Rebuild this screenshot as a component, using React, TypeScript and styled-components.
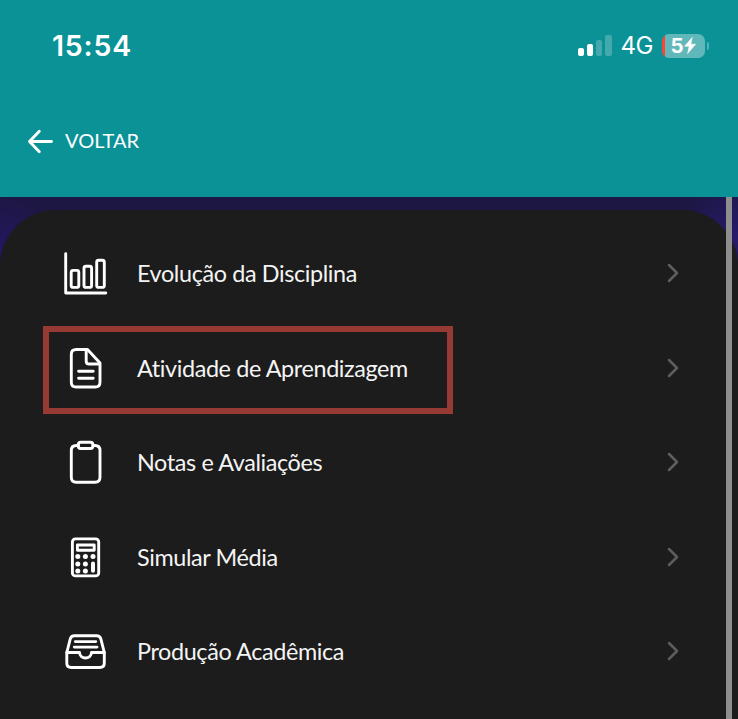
import React from "react";
import styled, { createGlobalStyle } from "styled-components";

const GlobalStyle = createGlobalStyle`
  * { box-sizing: border-box; }
  html, body { margin: 0; padding: 0; background: #1c1c1c; overflow: hidden; }
`;

const Screen = styled.div`
  width: 738px;
  height: 719px;
  display: flex;
  flex-direction: column;
  overflow: hidden;
  color: #f4f4f4;
  font-family: Lato, sans-serif;
`;

const Header = styled.header`
  height: 197px;
  flex: none;
  background: #0a9297;
`;

const StatusBar = styled.div`
  height: 91px;
  padding: 0 29px 0 52px;
  display: flex;
  align-items: center;
  justify-content: space-between;
  color: #fff;
  font-family: Inter, sans-serif;
`;

const Clock = styled.span`
  font-size: 28.5px;
  font-weight: 600;
  letter-spacing: 0.8px;
`;

const Indicators = styled.div`
  display: flex;
  align-items: center;
`;

const Signal = styled.div`
  display: flex;
  align-items: flex-end;
  gap: 3px;
  margin-right: 9px;
  height: 21px;
`;

const SignalBar = styled.i<{ $height: number; $active?: boolean }>`
  width: 6.2px;
  height: ${(p) => p.$height}px;
  border-radius: 2px;
  background: ${(p) => (p.$active ? "#fff" : "#43a9ad")};
`;

const Network = styled.span`
  width: 32px;
  margin-right: 9px;
  font-size: 24px;
  line-height: 26px;
  padding-top: 1px;
  letter-spacing: -0.4px;
`;

const Battery = styled.div`
  width: 43px;
  height: 24px;
  display: flex;
  align-items: center;
  justify-content: center;
  border-radius: 7px;
  background: linear-gradient(to right, #ff4335 2.5px, #60b8bb 2.5px);
  font-size: 20.5px;
  font-weight: 700;
  line-height: 24px;
`;

const BatteryTip = styled.i`
  width: 2.5px;
  height: 8px;
  margin-left: 2px;
  border-radius: 0 4px 4px 0;
  background: #54b1b5;
`;

const BackButton = styled.button`
  display: flex;
  align-items: center;
  gap: 12px;
  height: 40px;
  margin: 30px 0 0 27px;
  padding: 0;
  border: 0;
  background: none;
  color: #fff;
  font: 400 20px/24px Lato, sans-serif;
`;

const BackLabel = styled.span`
  padding-bottom: 2px;
`;

const Content = styled.main`
  position: relative;
  flex: 1;
  padding-top: 13px;
  background:
    radial-gradient(circle at 0 55px, #231760, #1d1743 60px, transparent 61px),
    radial-gradient(circle at 738px 40px, #261a6c, #1d1743 60px, transparent 61px),
    #1d1743;
`;

const Panel = styled.nav`
  height: 509px;
  padding-top: 16px;
  border-radius: 56px 56px 0 0;
  background: #1c1c1c;
`;

const Row = styled.a`
  position: relative;
  display: flex;
  align-items: center;
  height: 94.5px;
  padding: 0 56px 0 61px;
`;

const Label = styled.span`
  flex: 1;
  margin-left: 28px;
  font-size: 23.4px;
  line-height: 30px;
  letter-spacing: -0.38px;
  white-space: nowrap;
`;

const Highlight = styled.div`
  position: absolute;
  left: 43px;
  top: 5.5px;
  width: 410px;
  height: 88px;
  border: 6px solid #963a33;
`;

const ScrollThumb = styled.div`
  position: absolute;
  top: 0;
  right: 6px;
  width: 6px;
  height: 100%;
  background: #8e8e8e;
`;

const Glyph = styled.svg`
  display: block;
  flex: none;
  fill: none;
  stroke: #fff;
  stroke-width: 2.9;
  stroke-linecap: round;
  stroke-linejoin: round;
`;

const Chevron = styled(Glyph)`
  stroke: #5e5e5e;
  stroke-width: 2.5;
`;

const Dot = styled.circle`
  fill: #fff;
  stroke: none;
`;

const ChartIcon = () => (
  <Glyph width="48" height="48">
    <path d="M4.7 4.6V44H44.8" />
    <rect x="10.2" y="21.4" width="7.6" height="17" rx="2" />
    <rect x="23" y="17.3" width="7.6" height="21.1" rx="2" />
    <rect x="35.7" y="11.3" width="7.6" height="27.1" rx="2" />
  </Glyph>
);

const DocumentIcon = () => (
  <Glyph width="48" height="48">
    <path d="M15.3 5.5H26.5L39 19V38.2Q39 43 34.2 43H15.1Q10.3 43 10.3 38.2V10.3Q10.3 5.5 15.3 5.5Z" />
    <path d="M25.2 6V17.2Q25.2 20 28 20H38.5M17.6 27.3H32.2M17.6 34.2H32.2" />
  </Glyph>
);

const ClipboardIcon = () => (
  <Glyph width="48" height="48">
    <path d="M17.5 7.5H15.3Q10.3 7.5 10.3 12.5V39.3Q10.3 44.3 15.3 44.3H34Q39 44.3 39 39.3V12.5Q39 7.5 34 7.5H32" />
    <rect x="17.3" y="4.2" width="14.6" height="6.3" rx="2.5" />
  </Glyph>
);

const CalculatorIcon = () => (
  <Glyph width="48" height="48">
    <rect x="11.4" y="5.9" width="26.3" height="37" rx="3" />
    <rect x="16.4" y="12" width="16.8" height="5.2" />
    {[23.6, 31, 38].map((y) =>
      [16.8, 24.4, 32].map((x) =>
        x === 32 && y !== 23.6 ? null : <Dot key={`${x}-${y}`} cx={x} cy={y} r="2.5" />
      )
    )}
    <path d="M32 30.4V37.8" strokeWidth="4" />
  </Glyph>
);

const InboxIcon = () => (
  <Glyph width="48" height="48">
    <path d="M5.8 25.5L9.2 12.2Q10.1 8.8 13.6 8.8H35.6Q39.1 8.8 39.9 12.2L43.3 25.5V36Q43.3 40.5 38.8 40.5H10.3Q5.8 40.5 5.8 36Z" />
    <path d="M5.8 25.5H18.5C18.8 32.8 30.2 32.8 30.5 25.5H43.3M14.3 14.6H34.8M13.3 20.1H36" />
  </Glyph>
);

const items = [
  { label: "Evolução da Disciplina", Icon: ChartIcon },
  { label: "Atividade de Aprendizagem", Icon: DocumentIcon, highlighted: true },
  { label: "Notas e Avaliações", Icon: ClipboardIcon },
  { label: "Simular Média", Icon: CalculatorIcon },
  { label: "Produção Acadêmica", Icon: InboxIcon },
];

export default function App() {
  return (
    <>
      <GlobalStyle />
      <Screen>
        <Header>
          <StatusBar>
            <Clock>15:54</Clock>
            <Indicators>
              <Signal>
                <SignalBar $height={8} $active />
                <SignalBar $height={12} $active />
                <SignalBar $height={16} />
                <SignalBar $height={21} />
              </Signal>
              <Network>4G</Network>
              <Battery>
                5
                <svg width="12" height="17" viewBox="0 0 12 17">
                  <path d="M8.2 0.5L0.6 9.2H5.2L3.6 16.5L11.6 7.2H6.8Z" fill="#fff" stroke="#fff" strokeWidth="0.6" />
                </svg>
              </Battery>
              <BatteryTip />
            </Indicators>
          </StatusBar>
          <BackButton>
            <Glyph width="26" height="26">
              <path d="M12.3 3.3L2.5 13.5L12.3 23.7M2.5 13.5H24.5" />
            </Glyph>
            <BackLabel>VOLTAR</BackLabel>
          </BackButton>
        </Header>
        <Content>
          <Panel>
            {items.map(({ label, Icon, highlighted }) => (
              <Row key={label}>
                <Icon />
                <Label>{label}</Label>
                <Chevron width="18" height="22">
                  <path d="M5 3L13 11L5 19" />
                </Chevron>
                {highlighted && <Highlight />}
              </Row>
            ))}
          </Panel>
          <ScrollThumb />
        </Content>
      </Screen>
    </>
  );
}
